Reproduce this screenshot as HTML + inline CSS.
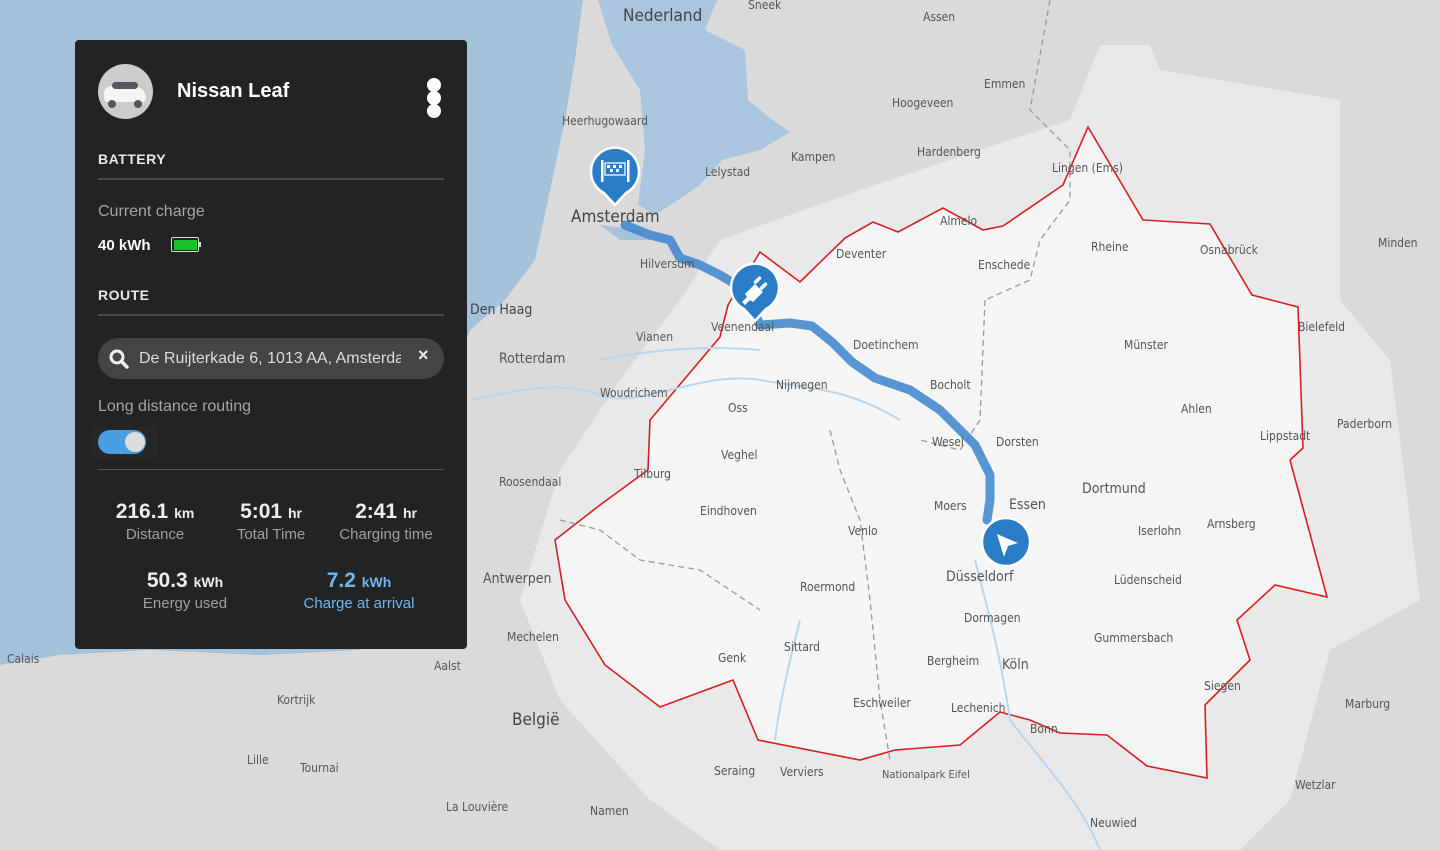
<!DOCTYPE html>
<html><head><meta charset="utf-8"><style>
*{margin:0;padding:0;box-sizing:border-box}
body{width:1440px;height:850px;overflow:hidden;position:relative;font-family:"Liberation Sans",sans-serif;background:#dcdcdc}
#map{position:absolute;left:0;top:0}
.lbl{font-family:"DejaVu Sans Condensed","DejaVu Sans",sans-serif;fill:#555;font-size:12px}
.big{font-size:17px;fill:#444}
.panel{position:absolute;left:75px;top:40px;width:392px;height:609px;background:#222323;border-radius:4px;color:#fff}
.t{position:absolute;white-space:nowrap}
.h{font-weight:bold;font-size:14px;letter-spacing:.5px;color:#e8e8e8}
.line{position:absolute;left:23px;width:346px;height:2px;background:#4a4a4a}
.g{color:#a5a5a5;font-size:16px}
.stat{position:absolute;text-align:center;white-space:nowrap}
.stat b{font-size:21px;color:#eee}
.stat b small{font-size:14px}
.stat div{font-size:15px;color:#a0a0a0;margin-top:2px}
</style></head><body>
<svg id="map" width="1440" height="850" viewBox="0 0 1440 850">
<rect width="1440" height="850" fill="#dadada"/>
<path d="M0 0H583L575 60 565 120 548 200 535 260 505 300 470 330 455 370 445 430 430 500 420 560 400 620 360 650 260 655 150 650 60 655 0 665Z" fill="#a5c2db"/>
<path d="M598 0H717L705 30 745 50 748 100 770 118 790 132 760 150 722 160 700 185 675 202 655 215 638 205 645 150 640 90 612 45Z" fill="#a9c6de"/>
<path d="M600 225 640 230 650 240 620 240Z" fill="#a5c2db"/>
<path d="M720 240 860 190 1070 120 1100 45 1150 45 1160 70 1340 100 1340 165 1340 300 1390 360 1420 600 1330 650 1290 800 1240 850 720 850 650 800 560 700 520 600 560 470 620 380 680 300Z" fill="#e9e9e9"/>
<polygon fill="#f5f5f5" stroke="#d62020" stroke-width="1.6" points="1088,127 1143,220 1210,224 1252,295 1298,307 1303,448 1290,460 1327,597 1275,585 1237,620 1250,660 1205,705 1207,778 1147,766 1107,735 1060,733 1030,720 1000,712 960,745 895,750 860,760 758,740 733,680 660,707 605,665 565,600 555,540 600,505 648,470 650,420 720,337 728,305 760,252 800,282 845,238 873,222 898,232 943,208 983,230 1003,226 1063,185"/>
<g fill="none" stroke="#b8d6ee" stroke-width="2"><path d="M470 400C520 390 560 380 600 395S700 370 760 380 850 390 900 420"/><path d="M600 360C650 350 700 345 760 350"/><path d="M800 620C790 660 780 700 775 740"/><path d="M975 560C985 600 1000 650 1010 720 1040 760 1080 800 1100 850"/></g>
<g fill="none" stroke="#9a9a9a" stroke-width="1.3" stroke-dasharray="6 4"><path d="M1050 0 1030 110 1070 150 1070 200 1040 240 1030 280 985 300"/><path d="M985 300 980 420 960 450 920 440"/><path d="M830 430 840 470 860 520 870 600 880 700 890 760"/><path d="M560 520 600 530 640 560 700 570 760 610"/></g>
<path d="M625 225 650 235 670 240 680 258 700 265 720 275 745 290 760 325 790 323 812 326 832 342 852 362 875 378 910 390 940 410 960 430 975 445 990 475 990 500 987 520" fill="none" stroke="#3c84cc" stroke-width="9" stroke-linejoin="round" stroke-linecap="round" opacity=".85"/>
<g class="lbl">
<text x="623" y="21" class="big">Nederland</text><text x="748" y="9">Sneek</text><text x="923" y="21">Assen</text><text x="984" y="88">Emmen</text><text x="892" y="107">Hoogeveen</text>
<text x="562" y="125">Heerhugowaard</text><text x="705" y="176">Lelystad</text><text x="791" y="161">Kampen</text><text x="917" y="156">Hardenberg</text><text x="1052" y="172">Lingen (Ems)</text>
<text x="571" y="222" class="big">Amsterdam</text><text x="640" y="268">Hilversum</text><text x="940" y="225">Almelo</text><text x="836" y="258">Deventer</text><text x="978" y="269">Enschede</text><text x="1091" y="251">Rheine</text><text x="1200" y="254">Osnabrück</text><text x="1378" y="247">Minden</text>
<text x="470" y="314" class="big" style="font-size:14px">Den Haag</text><text x="711" y="331">Veenendaal</text><text x="636" y="341">Vianen</text><text x="499" y="363" style="font-size:14px">Rotterdam</text><text x="853" y="349">Doetinchem</text><text x="1124" y="349">Münster</text><text x="1298" y="331">Bielefeld</text>
<text x="776" y="389">Nijmegen</text><text x="930" y="389">Bocholt</text><text x="600" y="397">Woudrichem</text><text x="728" y="412">Oss</text><text x="1181" y="413">Ahlen</text><text x="1337" y="428">Paderborn</text><text x="1260" y="440">Lippstadt</text>
<text x="932" y="446">Wesel</text><text x="996" y="446">Dorsten</text><text x="721" y="459">Veghel</text><text x="634" y="478">Tilburg</text><text x="499" y="486">Roosendaal</text><text x="1082" y="493" style="font-size:14px">Dortmund</text>
<text x="1009" y="509" style="font-size:14px">Essen</text><text x="934" y="510">Moers</text><text x="700" y="515">Eindhoven</text><text x="1207" y="528">Arnsberg</text><text x="848" y="535">Venlo</text><text x="1138" y="535">Iserlohn</text>
<text x="946" y="581" style="font-size:14px">Düsseldorf</text><text x="483" y="583" style="font-size:14px">Antwerpen</text><text x="1114" y="584">Lüdenscheid</text><text x="800" y="591">Roermond</text><text x="964" y="622">Dormagen</text><text x="507" y="641">Mechelen</text><text x="1094" y="642">Gummersbach</text>
<text x="784" y="651">Sittard</text><text x="718" y="662">Genk</text><text x="927" y="665">Bergheim</text><text x="1002" y="669" style="font-size:14px">Köln</text><text x="7" y="663">Calais</text><text x="434" y="670">Aalst</text><text x="1204" y="690">Siegen</text>
<text x="277" y="704">Kortrijk</text><text x="853" y="707">Eschweiler</text><text x="951" y="712">Lechenich</text><text x="1345" y="708">Marburg</text><text x="512" y="725" class="big">België</text><text x="1030" y="733">Bonn</text>
<text x="247" y="764">Lille</text><text x="300" y="772">Tournai</text><text x="714" y="775">Seraing</text><text x="780" y="776">Verviers</text><text x="882" y="778" style="font-size:11px">Nationalpark Eifel</text><text x="1295" y="789">Wetzlar</text><text x="446" y="811">La Louvière</text><text x="590" y="815">Namen</text><text x="1090" y="827">Neuwied</text>
</g>
<g stroke="#fff" stroke-width="2.5"><path d="M591 172a24 24 0 1 1 35 21l-11 12-11-12a24 24 0 0 1-13-21z" fill="#2b7cc6"/><path d="M731 288a24 24 0 1 1 35 21l-11 12-11-12a24 24 0 0 1-13-21z" fill="#2b7cc6"/><circle cx="1006" cy="542" r="24" fill="#2b7cc6"/></g>
<g fill="#fff"><rect x="601" y="160" width="2.5" height="22"/><rect x="627" y="160" width="2.5" height="22"/><path d="M605 163h20v12h-20z" fill="none" stroke="#fff" stroke-width="1.2"/><rect x="607" y="165" width="3" height="3"/><rect x="613" y="165" width="3" height="3"/><rect x="619" y="165" width="3" height="3"/><rect x="610" y="169" width="3" height="3"/><rect x="616" y="169" width="3" height="3"/>
<path d="M742 302l5-5-2-3 10-10 8 8-10 10-3-2-5 5z"/><rect x="756" y="276" width="3.5" height="9" rx="1.5" transform="rotate(45 758 280)"/><rect x="762" y="282" width="3.5" height="9" rx="1.5" transform="rotate(45 764 286)"/>
<path d="M997 534L1018 543 1008 546 1004 557Z"/></g>
</svg>
<div class="panel">
<div style="position:absolute;left:23px;top:24px;width:55px;height:55px;border-radius:50%;background:#ccc;overflow:hidden"><div style="position:absolute;left:6px;top:22px;width:42px;height:16px;background:#f4f4f4;border-radius:8px 14px 4px 4px"></div><div style="position:absolute;left:14px;top:18px;width:26px;height:7px;background:#556;border-radius:4px"></div><div style="position:absolute;left:10px;top:36px;width:8px;height:8px;border-radius:50%;background:#555"></div><div style="position:absolute;left:36px;top:36px;width:8px;height:8px;border-radius:50%;background:#555"></div></div>
<div class="t" style="left:102px;top:40px;font-size:20px;font-weight:bold">Nissan Leaf</div>
<div style="position:absolute;left:352px;top:38px"><div style="width:14px;height:14px;border-radius:50%;background:#fff"></div><div style="width:14px;height:14px;border-radius:50%;background:#fff;margin-top:-1px"></div><div style="width:14px;height:14px;border-radius:50%;background:#fff;margin-top:-1px"></div></div>
<div class="t h" style="left:23px;top:111px">BATTERY</div><div class="line" style="top:138px"></div>
<div class="t g" style="left:23px;top:163px">Current charge</div>
<div class="t" style="left:23px;top:197px;font-weight:bold;font-size:15px">40 kWh</div>
<div style="position:absolute;left:96px;top:197px;width:28px;height:15px;border:1.5px solid #ddd;border-radius:2px;padding:1.5px"><div style="width:100%;height:100%;background:#17c22b"></div></div><div style="position:absolute;left:124px;top:202px;width:2px;height:5px;background:#ddd"></div>
<div class="t h" style="left:23px;top:247px">ROUTE</div><div class="line" style="top:274px"></div>
<div style="position:absolute;left:23px;top:298px;width:346px;height:41px;border-radius:21px;background:#434445"></div>
<svg style="position:absolute;left:34px;top:309px" width="20" height="20"><circle cx="8" cy="8" r="6" fill="none" stroke="#eee" stroke-width="3"/><path d="M12.5 12.5 18 18" stroke="#eee" stroke-width="3.5" stroke-linecap="round"/></svg>
<div class="t" style="left:64px;top:310px;font-size:16px;color:#ddd;width:262px;overflow:hidden">De Ruijterkade 6, 1013 AA, Amsterdam</div>
<div class="t" style="left:343px;top:305px;font-size:18px;font-weight:bold;color:#eee">×</div>
<div class="t g" style="left:23px;top:358px">Long distance routing</div>
<div style="position:absolute;left:17px;top:386px;width:66px;height:32px;background:#262727"></div>
<div style="position:absolute;left:23px;top:390px;width:48px;height:24px;border-radius:12px;background:#4a9fe0"></div><div style="position:absolute;left:50px;top:392px;width:20px;height:20px;border-radius:50%;background:#ddd"></div>
<div class="line" style="top:429px;height:1px;background:#555"></div>
<div class="stat" style="left:30px;top:460px;width:100px"><b>216.1 <small>km</small></b><div>Distance</div></div>
<div class="stat" style="left:146px;top:460px;width:100px"><b>5:01 <small>hr</small></b><div>Total Time</div></div>
<div class="stat" style="left:256px;top:460px;width:110px"><b>2:41 <small>hr</small></b><div>Charging time</div></div>
<div class="stat" style="left:50px;top:529px;width:120px"><b>50.3 <small>kWh</small></b><div>Energy used</div></div>
<div class="stat" style="left:214px;top:529px;width:140px;color:#6fb6ee"><b style="color:#6fb6ee">7.2 <small>kWh</small></b><div style="color:#6fb6ee">Charge at arrival</div></div>
</div>
</body></html>
